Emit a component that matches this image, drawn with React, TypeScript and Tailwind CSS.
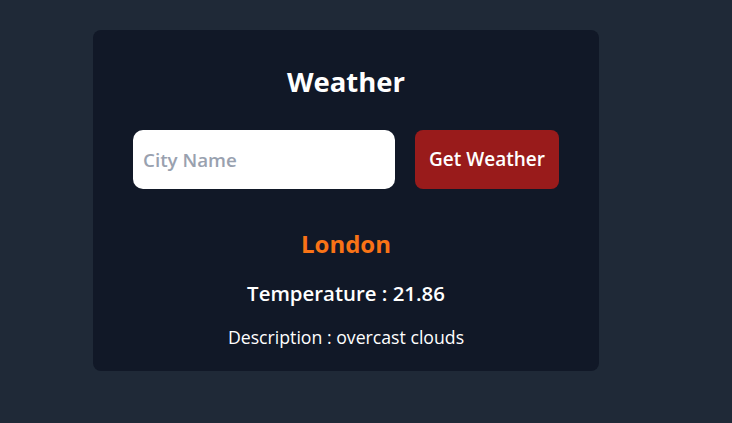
export default function App() {
  return (
    <div className="min-h-[423px] w-full bg-[#1f2937] pt-[30px] font-['Open_Sans',sans-serif]">
      <div className="ml-[93px] w-[506px] h-[341px] rounded-lg bg-[#111827] px-10 pt-[34px] flex flex-col items-center">
        <h1 className="text-[27.5px] leading-9 font-bold text-white">Weather</h1>
        <div className="mt-[30px] flex w-full gap-5">
          <input
            type="text"
            placeholder="City Name"
            className="h-[59px] w-[262px] rounded-[10px] bg-white px-[10px] text-[18.8px] font-semibold text-gray-900 placeholder:text-gray-400 outline-none"
          />
          <button className="h-[59px] w-[144px] rounded-[8px] bg-[#991b1b] text-[19px] font-semibold text-white">
            Get Weather
          </button>
        </div>
        <div className="mt-[41px] text-[24px] leading-7 font-bold text-[#f97316]">London</div>
        <div className="mt-[21px] text-[20.4px] leading-7 font-semibold text-white">Temperature : 21.86</div>
        <div className="mt-[16px] text-[17.7px] leading-7 text-white">Description : overcast clouds</div>
      </div>
    </div>
  );
}
